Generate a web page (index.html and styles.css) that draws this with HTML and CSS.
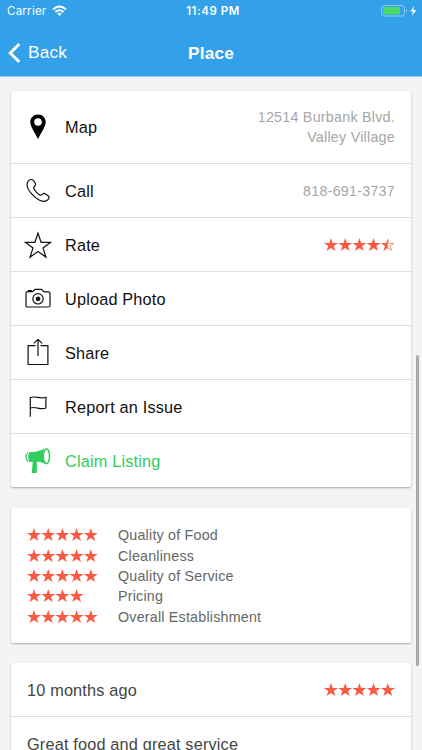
FILE: index.html
```
<!DOCTYPE html>
<html lang="en">
<head>
<meta charset="utf-8">
<title>Place</title>
<link rel="stylesheet" href="styles.css">
</head>
<body>
<svg class="defs" width="0" height="0">
  <symbol id="star" viewBox="0 0 14 14"><path d="M7 .1 8.7 5H14L9.8 8 11.4 13 7 10 2.6 13 4.2 8 0 5H5.3Z"/></symbol>
  <symbol id="half" viewBox="0 0 14 14"><path d="M7 .1V10L2.6 13 4.2 8 0 5H5.3Z"/><path d="M7 1.5 8.4 5.4H13L9.3 8 10.7 12.2 7 9.6" fill="none" stroke="currentColor" stroke-width=".7"/></symbol>
  <symbol id="stars4" viewBox="0 0 71 14"><use href="#star" width="14" height="14"/><use href="#star" x="14.2" width="14" height="14"/><use href="#star" x="28.4" width="14" height="14"/><use href="#star" x="42.6" width="14" height="14"/></symbol>
  <symbol id="stars5" viewBox="0 0 71 14"><use href="#stars4" width="71" height="14"/><use href="#star" x="56.8" width="14" height="14"/></symbol>
  <symbol id="stars45" viewBox="0 0 71 14"><use href="#stars4" width="71" height="14"/><use href="#half" x="56.8" width="14" height="14"/></symbol>
</svg>
<header class="top">
  <div class="status">
    <div class="carrier">Carrier
      <svg width="15" height="12" viewBox="0 0 15 12" fill="none" stroke="#fff" stroke-width="2"><path d="M1 4.4Q7.5-1.3 14 4.4M3.4 7Q7.5 3.5 11.6 7"/><path d="M7.5 11 5.1 8.6Q7.5 6.7 9.9 8.6Z" fill="#fff" stroke="none"/></svg>
    </div>
    <div class="time">11:49 PM</div>
    <svg class="battery" width="36" height="13" viewBox="0 0 36 13"><rect x=".5" y=".5" width="23" height="10.5" rx="2.5" fill="none" stroke="#8fc8f3"/><rect x="2" y="2" width="17" height="7.5" rx="1" fill="#4cd964"/><path d="M25 4Q27.5 5.7 25 7.5Z" fill="#8fc8f3"/><path d="M33.2 1 29.3 6.5H32L31 11 35.2 5.1H32.4Z" fill="#fff"/></svg>
  </div>
  <nav class="nav">
    <div class="back"><svg width="13" height="22" viewBox="0 0 13 22"><path d="M11.3 2 2.3 11 11.3 20" fill="none" stroke="#fff" stroke-width="3"/></svg><span>Back</span></div>
    <h1>Place</h1>
  </nav>
</header>
<main>
  <section class="card">
    <div class="row map">
      <svg class="icon" viewBox="0 0 28 28"><path fill-rule="evenodd" d="M14 1.5C9.5 1.5 6.3 4.7 6.3 9 6.3 13.5 10.5 19 14 26 17.5 19 21.7 13.5 21.7 9 21.7 4.7 18.5 1.5 14 1.5ZM14 5.2A3.8 3.8 0 1 1 14 12.8 3.8 3.8 0 0 1 14 5.2Z"/></svg>
      <span class="label">Map</span><span class="detail">12514 Burbank Blvd.<br>Valley Village</span>
    </div>
    <div class="row">
      <svg class="icon line" viewBox="0 0 28 28"><path d="M4.3 4C6.3 1.8 8.6 2.2 10 4.2L11.3 6.3C12.6 8.7 9.4 9.3 9.7 11 10.4 13.5 13.7 17 16.3 18.1 18 18.7 18.6 15.6 20.8 16.6L23.8 18.5C25.5 19.6 25.4 21.3 24 22.7 19.5 27.2 11.6 21.6 7.3 16.4 3.6 12 1.9 7 4.3 4Z"/></svg>
      <span class="label">Call</span><span class="detail">818-691-3737</span>
    </div>
    <div class="row">
      <svg class="icon line" viewBox="0 0 28 28"><path d="M14 2.2 17.1 11.3H26.6L19 16.9 21.9 26.1 14 20.4 6.1 26.1 9 16.9 1.4 11.3H10.9Z"/></svg>
      <span class="label">Rate</span><svg class="stars"><use href="#stars45"/></svg>
    </div>
    <div class="row">
      <svg class="icon line" viewBox="0 0 28 28"><path d="M3.8 6.6H8.3C9.6 6.3 9.8 4.3 11.5 4.3H17C18.5 4.3 18.8 6.3 20.2 6.8H24.2Q26 6.8 26 8.5V20.2Q26 22 24.2 22H3.8Q2 22 2 20.2V8.4Q2 6.6 3.8 6.6ZM4.5 6.3V5.5H7.4V6.3"/><circle cx="14" cy="13.8" r="5.2"/><circle cx="14" cy="13.8" r="1.8" fill="#111"/></svg>
      <span class="label">Upload Photo</span>
    </div>
    <div class="row">
      <svg class="icon line" viewBox="0 0 28 28"><path d="M11.5 6.7H4.1V25.5H23.9V6.7H16.5M14 17V.5M9.9 4.4 14 .4 18.1 4.4"/></svg>
      <span class="label">Share</span>
    </div>
    <div class="row">
      <svg class="icon line" viewBox="0 0 28 28"><path d="M6.3 23.7V4.6C11.5 2.4 15.5 6.4 21.9 4.3V15C16 17.6 12 12.8 6.3 15"/></svg>
      <span class="label">Report an Issue</span>
    </div>
    <div class="row claim">
      <svg class="icon" viewBox="0 0 28 28"><path d="M5.5 5C10 5.4 15 4.6 20 1.4 18.2 6 18.7 12 20.8 17 17.4 15.1 15 14.6 12.9 14.9L12.8 26H7.6L8.8 15H5.5Q3 10 5.5 5Z"/><path d="M4.2 5.3Q-.4 10 4.2 14.7" fill="none" stroke="currentColor" stroke-width="1.2"/><ellipse cx="22.4" cy="9.2" rx="3.1" ry="7.5" fill="#fff" stroke="currentColor" stroke-width="1.5"/></svg>
      <span class="label">Claim Listing</span>
    </div>
  </section>
  <section class="card scores">
    <div class="score"><svg class="stars"><use href="#stars5"/></svg><span>Quality of Food</span></div>
    <div class="score"><svg class="stars"><use href="#stars5"/></svg><span>Cleanliness</span></div>
    <div class="score"><svg class="stars"><use href="#stars5"/></svg><span>Quality of Service</span></div>
    <div class="score"><svg class="stars"><use href="#stars4"/></svg><span>Pricing</span></div>
    <div class="score"><svg class="stars"><use href="#stars5"/></svg><span>Overall Establishment</span></div>
  </section>
  <section class="card review">
    <div class="row"><span class="label">10 months ago</span><svg class="stars"><use href="#stars5"/></svg></div>
    <div class="row"><span class="label">Great food and great service</span></div>
  </section>
</main>
<div class="scrollbar"></div>
</body>
</html>
```
FILE: styles.css
```
* { box-sizing: border-box; }
body {
  margin: 0;
  height: 750px;
  overflow: hidden;
  background: #f4f4f4;
  font-family: "Liberation Sans", Arial, sans-serif;
  font-size: 16.3px;
  letter-spacing: .17px;
  color: #111;
}
.defs { position: absolute; }
.top {
  height: 77px;
  background: #33a0ea;
  border-bottom: 1px solid #8fc7ef;
  color: #fff;
}
.status {
  display: grid;
  grid-template-columns: 1fr auto 1fr;
  align-items: center;
  height: 22px;
  padding: 0 5px 0 7px;
  font-family: Inter, sans-serif;
  font-size: 11.5px;
}
.carrier { display: flex; align-items: center; gap: 6px; letter-spacing: .25px; }
.time { font-weight: 600; letter-spacing: .55px; padding-left: 2px; }
.battery { justify-self: end; }
.nav {
  display: grid;
  grid-template-columns: 1fr auto 1fr;
  align-items: center;
  height: 54px;
  padding: 8px 8px 0;
  font-size: 17.3px;
}
.back { display: flex; align-items: center; gap: 7px; margin-top: -1px; }
.nav h1 { margin: 0; font-size: 17.3px; font-weight: 700; }
main { padding: 14px 11px 0; }
.card {
  background: #fff;
  border-radius: 2px;
  box-shadow: 0 1px 2px rgba(0, 0, 0, .3);
  margin-bottom: 21px;
}
.row {
  display: flex;
  align-items: center;
  height: 54px;
  padding: 0 16px 0 13px;
  border-bottom: 1px solid #dedede;
}
.row:last-child { border-bottom: 0; }
.row.map { height: 73px; }
.icon { width: 28px; height: 28px; margin-right: 13px; }
.line { fill: none; stroke: #111; stroke-width: 1.2; }
.label { flex: 1; padding-top: 2px; }
.map .label, .review .row:last-child .label { padding-top: 0; }
.detail {
  font-size: 14.3px;
  line-height: 20.5px;
  letter-spacing: .24px;
  text-align: right;
  color: #a6a6a6;
  padding-top: 1px;
}
.map .detail { padding-top: 0; }
.claim { color: #32cd60; height: 53px; }
.claim .icon { fill: #32cd60; }
.stars { width: 71px; height: 14px; fill: #fb5a42; color: #fb5a42; }
.scores { padding: 17px 16px 16px; height: 135px; margin-bottom: 20px; }
.score {
  display: flex;
  align-items: center;
  gap: 20px;
  height: 20.4px;
  font-size: 14.3px;
  letter-spacing: .2px;
  color: #666;
}
.review { color: #444; height: 130px; }
.review .row { padding-left: 16px; }
.scrollbar {
  position: absolute;
  right: 3px;
  top: 355px;
  width: 3px;
  height: 311px;
  border-radius: 2px;
  background: #aaa;
}
```
